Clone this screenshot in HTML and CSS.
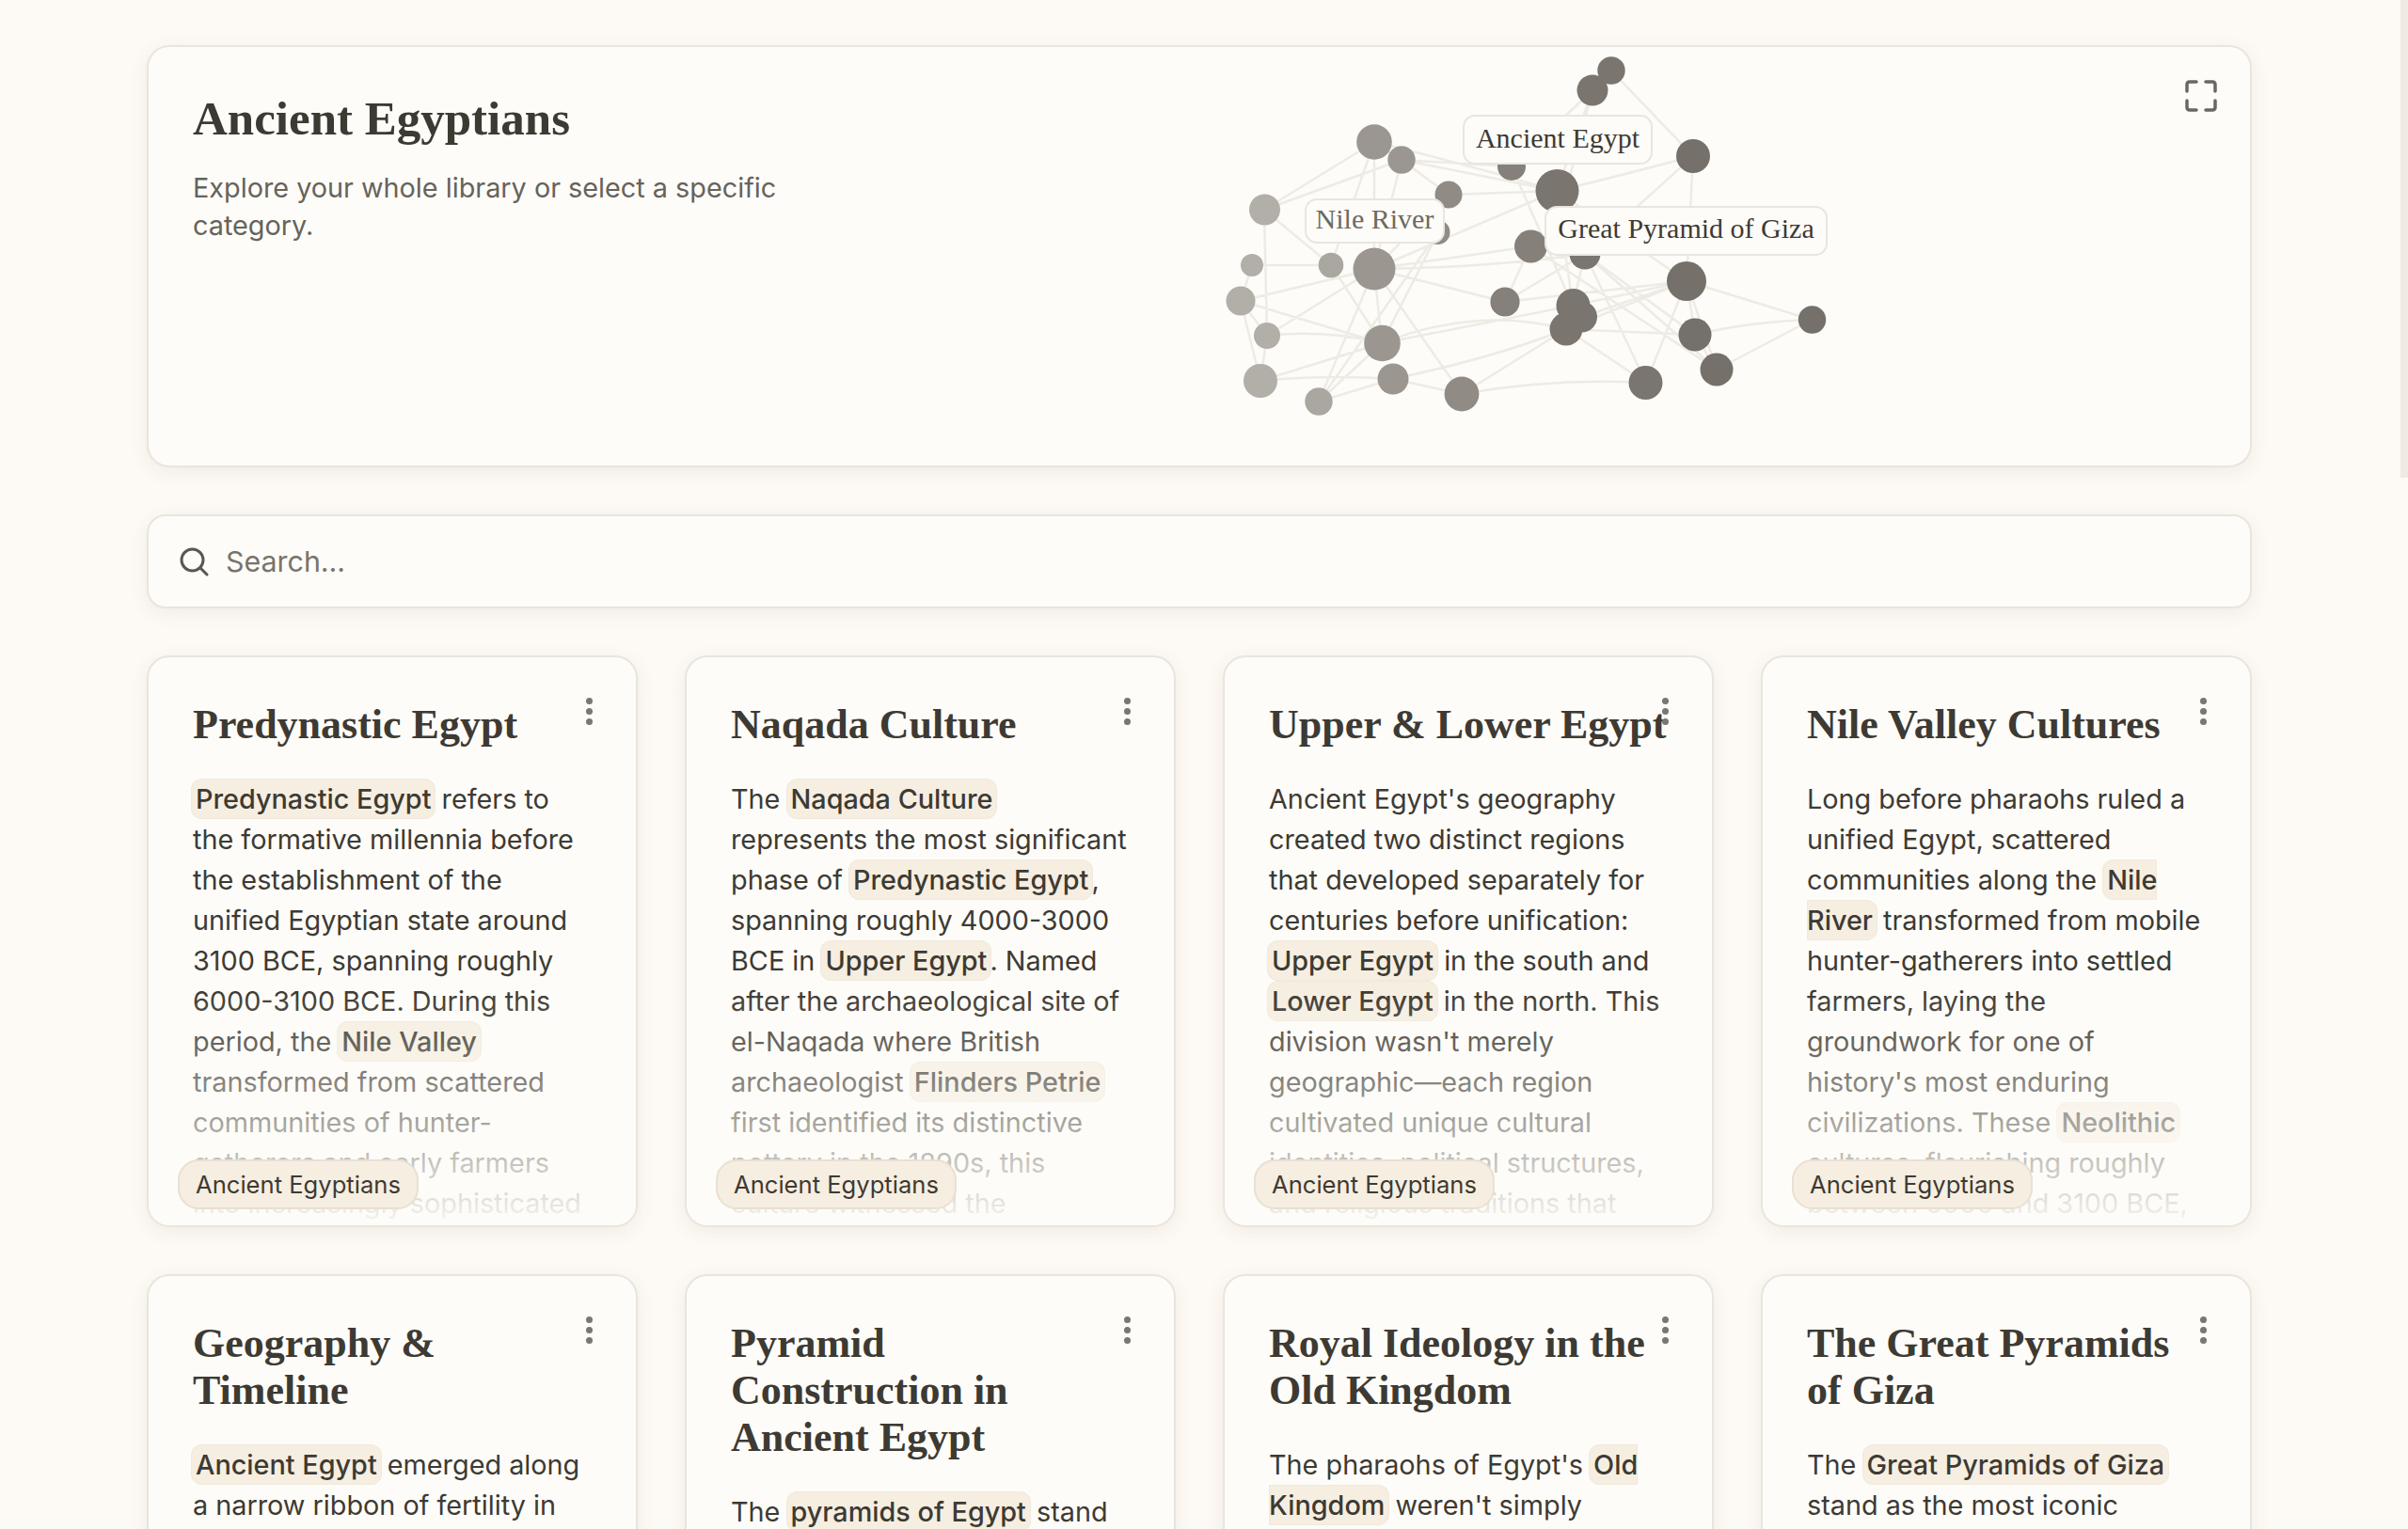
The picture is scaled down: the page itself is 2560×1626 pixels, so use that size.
FILE: index.html
```html
<!DOCTYPE html>
<html lang="en">
<head>
<meta charset="utf-8">
<title>Ancient Egyptians</title>
<link rel="stylesheet" href="styles.css">
</head>
<body>
<div class="scrollbar"></div>
<main class="page">
  <section class="hero">
    <div class="hero-text">
      <h1>Ancient Egyptians</h1>
      <p>Explore your whole library or select a specific category.</p>
    </div>
    <svg class="graph" viewBox="156 48 2238 449" aria-hidden="true">
      <g class="edges">
        <path d="M1461 151L1344 223M1490 170L1344 223M1461 151L1490 170M1461 151Q1560 175 1655 203M1490 170L1655 203M1490 170L1540 207M1540 207L1655 203M1461 151L1415 282M1461 151L1461 286M1490 170L1461 286M1344 223L1415 282M1344 223L1347 357M1331 282L1415 282M1331 282L1319 320M1319 320L1461 286M1319 320L1347 357M1319 320L1340 405M1319 320L1469 365M1347 357L1340 405M1347 357Q1410 350 1469 365M1347 357L1461 286M1340 405L1469 365M1340 405Q1410 398 1481 403M1402 427L1461 286M1402 427L1469 365M1402 427L1481 403M1481 403L1554 419M1554 419Q1650 402 1750 407M1469 365L1461 286M1415 282L1469 365M1461 286L1554 419M1461 286L1600 321M1461 286L1627 262M1461 286Q1580 285 1685 270M1461 286L1655 203M1461 286L1540 207M1529 247L1402 427M1529 247L1469 365M1600 321L1685 270M1600 321L1793 299M1600 321L1627 262M1469 365Q1570 325 1665 350M1469 365L1672 325M1481 403Q1590 380 1665 350M1554 419L1665 350M1655 203Q1730 185 1800 166M1655 203L1793 299M1800 166L1793 299M1800 166L1685 270M1793 299L1926 340M1793 299L1802 356M1793 299L1672 325M1793 299L1682 337M1793 299L1665 350M1793 299L1825 393M1793 299L1750 407M1802 356Q1860 342 1926 340M1825 393L1926 340M1802 356L1825 393M1802 356L1665 350M1665 350L1750 407M1685 270L1802 356M1685 270L1825 393M1685 270L1750 407M1627 262L1825 393M1685 270L1672 325M1655 203L1672 325M1607 177L1672 325M1713 75L1693 96M1693 96L1655 203M1713 75L1800 166M1693 96L1607 177M1607 177L1490 170M1693 96L1665 203"/>
      </g>
      <g class="nodes">
        <circle class="n1" cx="1340" cy="405" r="18"/>
        <circle class="n1" cx="1319" cy="320" r="15.5"/>
        <circle class="n1" cx="1331" cy="282" r="12"/>
        <circle class="n1" cx="1347" cy="357" r="14"/>
        <circle class="n1" cx="1344.5" cy="223" r="16.5"/>
        <circle class="n2" cx="1402" cy="427" r="14.7"/>
        <circle class="n2" cx="1415" cy="282" r="13.3"/>
        <circle class="n3" cx="1461" cy="151" r="18.8"/>
        <circle class="n3" cx="1490" cy="170" r="14.7"/>
        <circle class="n3" cx="1461" cy="286" r="22.5"/>
        <circle class="n3" cx="1469.5" cy="365" r="19.3"/>
        <circle class="n3" cx="1481" cy="403" r="16.5"/>
        <circle class="n4" cx="1540" cy="207" r="14.5"/>
        <circle class="n4" cx="1528.5" cy="247" r="13"/>
        <circle class="n4" cx="1554" cy="419" r="18.4"/>
        <circle class="n5" cx="1600" cy="321" r="15.6"/>
        <circle class="n5" cx="1607" cy="177" r="15"/>
        <circle class="n5" cx="1627.5" cy="262" r="17.5"/>
        <circle class="n6" cx="1655.5" cy="203" r="23"/>
        <circle class="n6" cx="1685" cy="270" r="16.5"/>
        <circle class="n6" cx="1693" cy="96" r="16.5"/>
        <circle class="n6" cx="1713" cy="75" r="14.7"/>
        <circle class="n6" cx="1665" cy="350" r="17.5"/>
        <circle class="n6" cx="1681.5" cy="337" r="16.5"/>
        <circle class="n6" cx="1672.5" cy="325" r="18"/>
        <circle class="n6" cx="1749.5" cy="407" r="18"/>
        <circle class="n7" cx="1800" cy="166" r="18"/>
        <circle class="n7" cx="1793" cy="299" r="21"/>
        <circle class="n7" cx="1802" cy="356" r="17.5"/>
        <circle class="n7" cx="1825" cy="393" r="17.5"/>
        <circle class="n7" cx="1926.5" cy="340" r="14.7"/>
      </g>
    </svg>
    <span class="node-label label-egypt">Ancient Egypt</span>
    <span class="node-label label-nile">Nile River</span>
    <span class="node-label label-giza">Great Pyramid of Giza</span>
    <svg class="expand" viewBox="0 0 34 34" aria-hidden="true"><path d="M2 12V5Q2 2 5 2H12M22 2H29Q32 2 32 5V12M32 22V29Q32 32 29 32H22M12 32H5Q2 32 2 29V22"/></svg>
  </section>

  <label class="search">
    <svg viewBox="0 0 32 32" aria-hidden="true"><circle cx="14.5" cy="14.5" r="11.5"/><path d="M23 23L30 30"/></svg>
    <span>Search...</span>
  </label>

  <section class="grid">
    <article class="card">
      <h2>Predynastic Egypt</h2>
      <p><mark>Predynastic Egypt</mark> refers to the formative millennia before the establishment of the unified Egyptian state around 3100 BCE, spanning roughly 6000-3100 BCE. During this period, the <mark>Nile Valley</mark> transformed from scattered communities of hunter-gatherers and early farmers into increasingly sophisticated</p>
      <span class="dots"><i></i><i></i><i></i></span>
      <span class="tag">Ancient Egyptians</span>
    </article>
    <article class="card">
      <h2>Naqada Culture</h2>
      <p>The <mark>Naqada Culture</mark> represents the most significant phase of <mark>Predynastic Egypt</mark>, spanning roughly 4000-3000 BCE in <mark>Upper Egypt</mark>. Named after the archaeological site of el-Naqada where British archaeologist <mark>Flinders Petrie</mark> first identified its distinctive pottery in the 1890s, this culture witnessed the</p>
      <span class="dots"><i></i><i></i><i></i></span>
      <span class="tag">Ancient Egyptians</span>
    </article>
    <article class="card">
      <h2>Upper &amp; Lower Egypt</h2>
      <p>Ancient Egypt's geography created two distinct regions that developed separately for centuries before unification: <mark>Upper Egypt</mark> in the south and <mark>Lower Egypt</mark> in the north. This division wasn't merely geographic—each region cultivated unique cultural identities, political structures, and religious traditions that</p>
      <span class="dots"><i></i><i></i><i></i></span>
      <span class="tag">Ancient Egyptians</span>
    </article>
    <article class="card">
      <h2>Nile Valley Cultures</h2>
      <p>Long before pharaohs ruled a unified Egypt, scattered communities along the <mark>Nile River</mark> transformed from mobile hunter-gatherers into settled farmers, laying the groundwork for one of history's most enduring civilizations. These <mark>Neolithic</mark> cultures, flourishing roughly between 6000 and 3100 BCE,</p>
      <span class="dots"><i></i><i></i><i></i></span>
      <span class="tag">Ancient Egyptians</span>
    </article>
    <article class="card">
      <h2>Geography &amp; Timeline</h2>
      <p><mark>Ancient Egypt</mark> emerged along a narrow ribbon of fertility in the vast deserts of northeastern Africa, shaped by the annual rhythm of the Nile flood and the seasons it set for farmers.</p>
      <span class="dots"><i></i><i></i><i></i></span>
      <span class="tag">Ancient Egyptians</span>
    </article>
    <article class="card">
      <h2>Pyramid<br>Construction in<br>Ancient Egypt</h2>
      <p>The <mark>pyramids of Egypt</mark> stand among the most remarkable engineering achievements of the ancient world, raised by organized labor over generations.</p>
      <span class="dots"><i></i><i></i><i></i></span>
      <span class="tag">Ancient Egyptians</span>
    </article>
    <article class="card">
      <h2>Royal Ideology in the Old Kingdom</h2>
      <p>The pharaohs of Egypt's <mark>Old Kingdom</mark> weren't simply political rulers of the land; they were held to be living gods whose authority joined heaven and earth across the realm.</p>
      <span class="dots"><i></i><i></i><i></i></span>
      <span class="tag">Ancient Egyptians</span>
    </article>
    <article class="card">
      <h2>The Great Pyramids of Giza</h2>
      <p>The <mark>Great Pyramids of Giza</mark> stand as the most iconic monuments of ancient Egypt, built for the kings of the Fourth Dynasty on the plateau west of the Nile.</p>
      <span class="dots"><i></i><i></i><i></i></span>
      <span class="tag">Ancient Egyptians</span>
    </article>
  </section>
</main>
</body>
</html>
```
FILE: styles.css
```css
* { box-sizing: border-box; }
html, body { margin: 0; height: 100%; overflow: hidden; }
body {
  position: relative;
  background: #fdf9f4;
  color: #3d3a33;
  font-family: Inter, "Liberation Sans", sans-serif;
  font-size: 28.8px;
}
.scrollbar {
  position: absolute;
  top: 0;
  right: 0;
  width: 8px;
  height: 508px;
  background: #efeae2;
}
.page {
  display: flex;
  flex-direction: column;
  gap: 50px;
  padding: 48px 166px 0 156px;
}
.hero, .search, .card {
  background: #fdfcf8;
  border: 2px solid #e9e5de;
  box-shadow: 0 5px 20px rgba(90, 75, 50, 0.08);
}
.hero {
  position: relative;
  height: 449px;
  border-radius: 24px;
  padding: 44px 47px;
}
.hero-text { position: relative; width: 640px; }
h1 {
  margin: 0;
  font: bold 51px/64px "Liberation Serif", serif;
  color: #3d3a33;
}
.hero-text p {
  margin: 22px 0 0;
  line-height: 40px;
  color: #66635c;
}
.graph {
  position: absolute;
  top: -2px;
  left: -2px;
  width: 2238px;
  height: 449px;
}
.edges path { fill: none; stroke: #eeebe5; stroke-width: 2.5; }
.n1 { fill: #b2aea8; }
.n2 { fill: #aaa6a0; }
.n3 { fill: #9b9790; }
.n4 { fill: #908b84; }
.n5 { fill: #85807a; }
.n6 { fill: #7a756e; }
.n7 { fill: #75706a; }
.node-label {
  position: absolute;
  display: flex;
  align-items: center;
  justify-content: center;
  height: 53px;
  padding-bottom: 4px;
  background: #fdfcf8;
  border: 2px solid #e9e6df;
  border-radius: 13px;
  font: 30px "Liberation Serif", serif;
  color: #3d3a33;
}
.label-egypt { left: 1397px; top: 72px; width: 202px; }
.label-nile { left: 1229px; top: 161px; width: 149px; height: 48px; color: #6c6962; }
.label-giza { left: 1484px; top: 169px; width: 301px; padding-bottom: 5px; }
.expand {
  position: absolute;
  top: 35px;
  right: 35px;
  width: 34px;
  height: 34px;
  fill: none;
  stroke: #6a6761;
  stroke-width: 3.5;
  stroke-linecap: round;
}
.search {
  display: flex;
  align-items: center;
  gap: 18px;
  height: 100px;
  padding: 0 32px;
  border-radius: 20px;
  font-size: 30.4px;
  color: #78746d;
}
.search svg {
  width: 32px;
  height: 32px;
  fill: none;
  stroke: #5a5751;
  stroke-width: 3;
  stroke-linecap: round;
}
.grid {
  display: grid;
  grid-template-columns: repeat(4, 522px);
  gap: 50px;
}
.card {
  position: relative;
  height: 608px;
  padding: 47px 45px 0 47px;
  border-radius: 24px;
  overflow: hidden;
}
.card::after {
  content: "";
  position: absolute;
  left: 0;
  right: 0;
  bottom: 0;
  height: 250px;
  background: linear-gradient(to bottom, rgba(253, 252, 248, 0), rgba(253, 252, 248, 0.97));
}
h2 {
  margin: 0 0 32px;
  font: bold 44px/50px "Liberation Serif", serif;
  color: #3d3a33;
}
.card p {
  margin: 0;
  line-height: 43px;
}
mark {
  margin: 0 -2px;
  padding: 4px 5px;
  border-radius: 12px;
  background: #f6eee1;
  box-shadow: inset 0 0 0 1px #f0e9dd;
  color: inherit;
  font-weight: 500;
}
.dots {
  position: absolute;
  top: 43px;
  right: 46px;
  display: flex;
  flex-direction: column;
  gap: 4px;
}
.dots i {
  width: 7px;
  height: 7px;
  border-radius: 50%;
  background: #7a7670;
}
.tag {
  position: absolute;
  z-index: 1;
  left: 31px;
  bottom: 17px;
  height: 53px;
  padding: 0 17px;
  display: flex;
  align-items: center;
  border: 2px solid #e8e0d3;
  border-radius: 22px;
  background: #f6eee1;
  font-size: 25.6px;
}
```
